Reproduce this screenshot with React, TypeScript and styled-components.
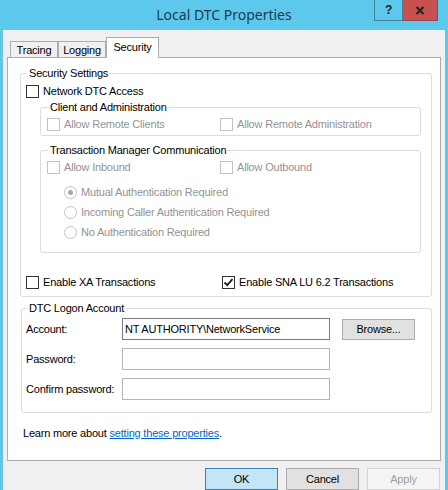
import styled, { createGlobalStyle } from "styled-components";

const GlobalStyle = createGlobalStyle`
  html, body {
    margin: 0;
    padding: 0;
    background: #5cc8ec;
    font-family: "Liberation Sans", Arial, sans-serif;
    font-size: 11px;
    letter-spacing: -0.2px;
    color: #000;
  }
`;

const Window = styled.div`
  width: 448px;
  height: 490px;
  background: #5cc8ec;
  display: flex;
  flex-direction: column;
  overflow: hidden;
`;

const TitleBar = styled.div`
  height: 30px;
  flex: none;
  display: grid;
  grid-template-columns: 1fr auto 1fr;
  align-items: start;
`;

const Title = styled.div`
  grid-column: 2;
  font-family: "Noto Sans", "Open Sans", sans-serif;
  font-size: 14px;
  letter-spacing: 0;
  line-height: 30px;
  color: #1c3a55;
`;

const CaptionButtons = styled.div`
  grid-column: 3;
  justify-self: end;
  display: flex;
  margin-right: 10px;
`;

const CaptionButton = styled.div<{ $close?: boolean }>`
  width: ${(p) => (p.$close ? "35px" : "29px")};
  height: 21px;
  box-sizing: border-box;
  display: flex;
  align-items: center;
  justify-content: center;
  background: ${(p) => (p.$close ? "#c75050" : "#5cc8ec")};
  border: 1px solid ${(p) => (p.$close ? "#a44040" : "#3e7f9c")};
  border-top: none;
  border-left-width: ${(p) => (p.$close ? "0" : "1px")};
  font-family: "Liberation Sans", Arial, sans-serif;
  font-weight: bold;
  font-size: 12px;
  color: #222;
`;

const Client = styled.div`
  flex: 1;
  margin: 0 3px;
  background: #f0f0f0;
  padding-top: 7px;
  display: flex;
  flex-direction: column;
`;

const TabRow = styled.div`
  display: flex;
  align-items: flex-end;
  height: 21px;
  margin: 0 0 -1px 7px;
  position: relative;
  z-index: 1;
`;

const Tab = styled.div<{ $active?: boolean; $width: number }>`
  box-sizing: border-box;
  width: ${(p) => p.$width}px;
  height: ${(p) => (p.$active ? "21px" : "16px")};
  margin-bottom: ${(p) => (p.$active ? "0" : "1px")};
  border: 1px solid #acacac;
  border-bottom: none;
  background: ${(p) => (p.$active ? "#fff" : "#f0f0f0")};
  display: flex;
  align-items: center;
  justify-content: center;
  padding-bottom: ${(p) => (p.$active ? "2px" : "0")};
`;

const Panel = styled.div`
  margin: 0 4px;
  background: #fff;
  border: 1px solid #adadad;
  padding: 8px 8px 20px 12px;
  display: flex;
  flex-direction: column;
`;

const GroupBox = styled.fieldset<{
  $inset?: string;
  $pad: string;
}>`
  margin: ${(p) => p.$inset || "0"};
  padding: ${(p) => p.$pad};
  border: 1px solid #dcdcdc;
  border-radius: 3px;
  min-width: 0;
`;

const Legend = styled.legend`
  padding: 0 2px;
  margin-left: 1px;
  line-height: 14px;
  font-size: 11px;
`;

const Pair = styled.div<{ $first: number; $top?: number }>`
  display: grid;
  grid-template-columns: ${(p) => p.$first}px 1fr;
  margin-top: ${(p) => p.$top || 0}px;
`;

const Option = styled.label<{ $disabled?: boolean; $top?: number }>`
  display: flex;
  align-items: center;
  height: 16px;
  margin-top: ${(p) => p.$top || 0}px;
  color: ${(p) => (p.$disabled ? "#939393" : "#000")};
  white-space: nowrap;
`;

const Box = styled.span<{ $disabled?: boolean }>`
  box-sizing: border-box;
  width: 13px;
  height: 13px;
  flex: none;
  margin-right: 4px;
  background: #fff;
  border: 1px solid ${(p) => (p.$disabled ? "#c2c2c2" : "#333")};
  display: flex;
  align-items: center;
  justify-content: center;
`;

const RadioList = styled.div`
  margin-top: 7px;
  padding-left: 17px;
  display: flex;
  flex-direction: column;
`;

const RadioRow = styled.label`
  display: flex;
  align-items: center;
  height: 20px;
  color: #939393;
  white-space: nowrap;
`;

const RadioDot = styled.span<{ $on?: boolean }>`
  box-sizing: border-box;
  width: 13px;
  height: 13px;
  flex: none;
  margin-right: 4px;
  border-radius: 50%;
  border: 1px solid #c2c2c2;
  background: #fff;
  display: flex;
  align-items: center;
  justify-content: center;

  &::after {
    content: "";
    width: 5px;
    height: 5px;
    border-radius: 50%;
    background: ${(p) => (p.$on ? "#a8a8a8" : "transparent")};
  }
`;

const LogonGrid = styled.div`
  display: grid;
  grid-template-columns: 96px 208px auto;
  row-gap: 8px;
  align-items: center;
`;

const FieldLabel = styled.span``;

const TextBox = styled.div<{ $strong?: boolean }>`
  box-sizing: border-box;
  height: 22px;
  border: 1px solid ${(p) => (p.$strong ? "#7a7a7a" : "#b5b5b5")};
  background: #fff;
  padding-left: 2px;
  display: flex;
  align-items: center;
  white-space: nowrap;
  overflow: hidden;
`;

const Button = styled.div<{ $kind?: "default" | "normal" | "disabled" }>`
  box-sizing: border-box;
  width: 73px;
  height: 22px;
  display: flex;
  align-items: center;
  justify-content: center;
  border: 1px solid
    ${(p) =>
      p.$kind === "default"
        ? "#3c7fb1"
        : p.$kind === "disabled"
        ? "#d2d2d2"
        : "#adadad"};
  background: ${(p) =>
    p.$kind === "default"
      ? "#c4e5f7"
      : p.$kind === "disabled"
      ? "#f4f4f4"
      : "#e1e1e1"};
  color: ${(p) => (p.$kind === "disabled" ? "#a0a0a0" : "#000")};
`;

const BrowseButton = styled(Button)`
  margin-left: 12px;
  height: 21px;
`;

const LearnMore = styled.div`
  margin: 13px 0 0 3px;
  line-height: 14px;
`;

const Link = styled.a`
  color: #0066cc;
  text-decoration: underline;
`;

const ButtonBar = styled.div`
  display: flex;
  justify-content: flex-end;
  gap: 8px;
  padding: 7px 5px 0 0;
`;

const CheckMark = () => (
  <svg width="11" height="11" viewBox="0 0 11 11">
    <path d="M1.5 5.5 L4.2 8.2 L9.5 2.2" fill="none" stroke="#1a1a1a" strokeWidth="1.8" />
  </svg>
);

type TCheckProps = {
  label: string;
  checked?: boolean;
  disabled?: boolean;
  top?: number;
};

const Check = ({ label, checked, disabled, top }: TCheckProps) => (
  <Option $disabled={disabled} $top={top}>
    <Box $disabled={disabled}>{checked && <CheckMark />}</Box>
    {label}
  </Option>
);

const radios = [
  { label: "Mutual Authentication Required", on: true },
  { label: "Incoming Caller Authentication Required", on: false },
  { label: "No Authentication Required", on: false },
];

const tabs = [
  { label: "Tracing", width: 48 },
  { label: "Logging", width: 48 },
  { label: "Security", width: 53, active: true },
];

const App = () => {
  return (
    <>
      <GlobalStyle />
      <Window>
        <TitleBar>
          <Title>Local DTC Properties</Title>
          <CaptionButtons>
            <CaptionButton>?</CaptionButton>
            <CaptionButton $close>
              <svg width="10" height="9" viewBox="0 0 10 9">
                <path d="M1.5 1 L8.5 8 M8.5 1 L1.5 8" stroke="#222" strokeWidth="2" />
              </svg>
            </CaptionButton>
          </CaptionButtons>
        </TitleBar>
        <Client>
          <TabRow>
            {tabs.map((tab) => (
              <Tab key={tab.label} $active={tab.active} $width={tab.width}>
                {tab.label}
              </Tab>
            ))}
          </TabRow>
          <Panel>
            <GroupBox $pad="3px 0 6px 5px">
              <Legend>Security Settings</Legend>
              <Check label="Network DTC Access" />

              <GroupBox $inset="1px 10px 0 14px" $pad="2px 0 3px 6px">
                <Legend>Client and Administration</Legend>
                <Pair $first={173}>
                  <Check label="Allow Remote Clients" disabled />
                  <Check label="Allow Remote Administration" disabled />
                </Pair>
              </GroupBox>

              <GroupBox $inset="7px 10px 0 14px" $pad="2px 0 10px 6px">
                <Legend>Transaction Manager Communication</Legend>
                <Pair $first={173}>
                  <Check label="Allow Inbound" disabled />
                  <Check label="Allow Outbound" disabled />
                </Pair>
                <RadioList>
                  {radios.map((r) => (
                    <RadioRow key={r.label}>
                      <RadioDot $on={r.on} />
                      {r.label}
                    </RadioRow>
                  ))}
                </RadioList>
              </GroupBox>

              <Pair $first={196} $top={21}>
                <Check label="Enable XA Transactions" />
                <Check label="Enable SNA LU 6.2 Transactions" checked />
              </Pair>
            </GroupBox>

            <GroupBox $inset="4px 0 0 1px" $pad="3px 0 12px 4px">
              <Legend>DTC Logon Account</Legend>
              <LogonGrid>
                <FieldLabel>Account:</FieldLabel>
                <TextBox $strong>NT AUTHORITY\NetworkService</TextBox>
                <BrowseButton>Browse...</BrowseButton>
                <FieldLabel>Password:</FieldLabel>
                <TextBox />
                <span />
                <FieldLabel>Confirm password:</FieldLabel>
                <TextBox />
                <span />
              </LogonGrid>
            </GroupBox>

            <LearnMore>
              Learn more about <Link>setting these properties</Link>.
            </LearnMore>
          </Panel>
          <ButtonBar>
            <Button $kind="default">OK</Button>
            <Button>Cancel</Button>
            <Button $kind="disabled">Apply</Button>
          </ButtonBar>
        </Client>
      </Window>
    </>
  );
};

export default App;
